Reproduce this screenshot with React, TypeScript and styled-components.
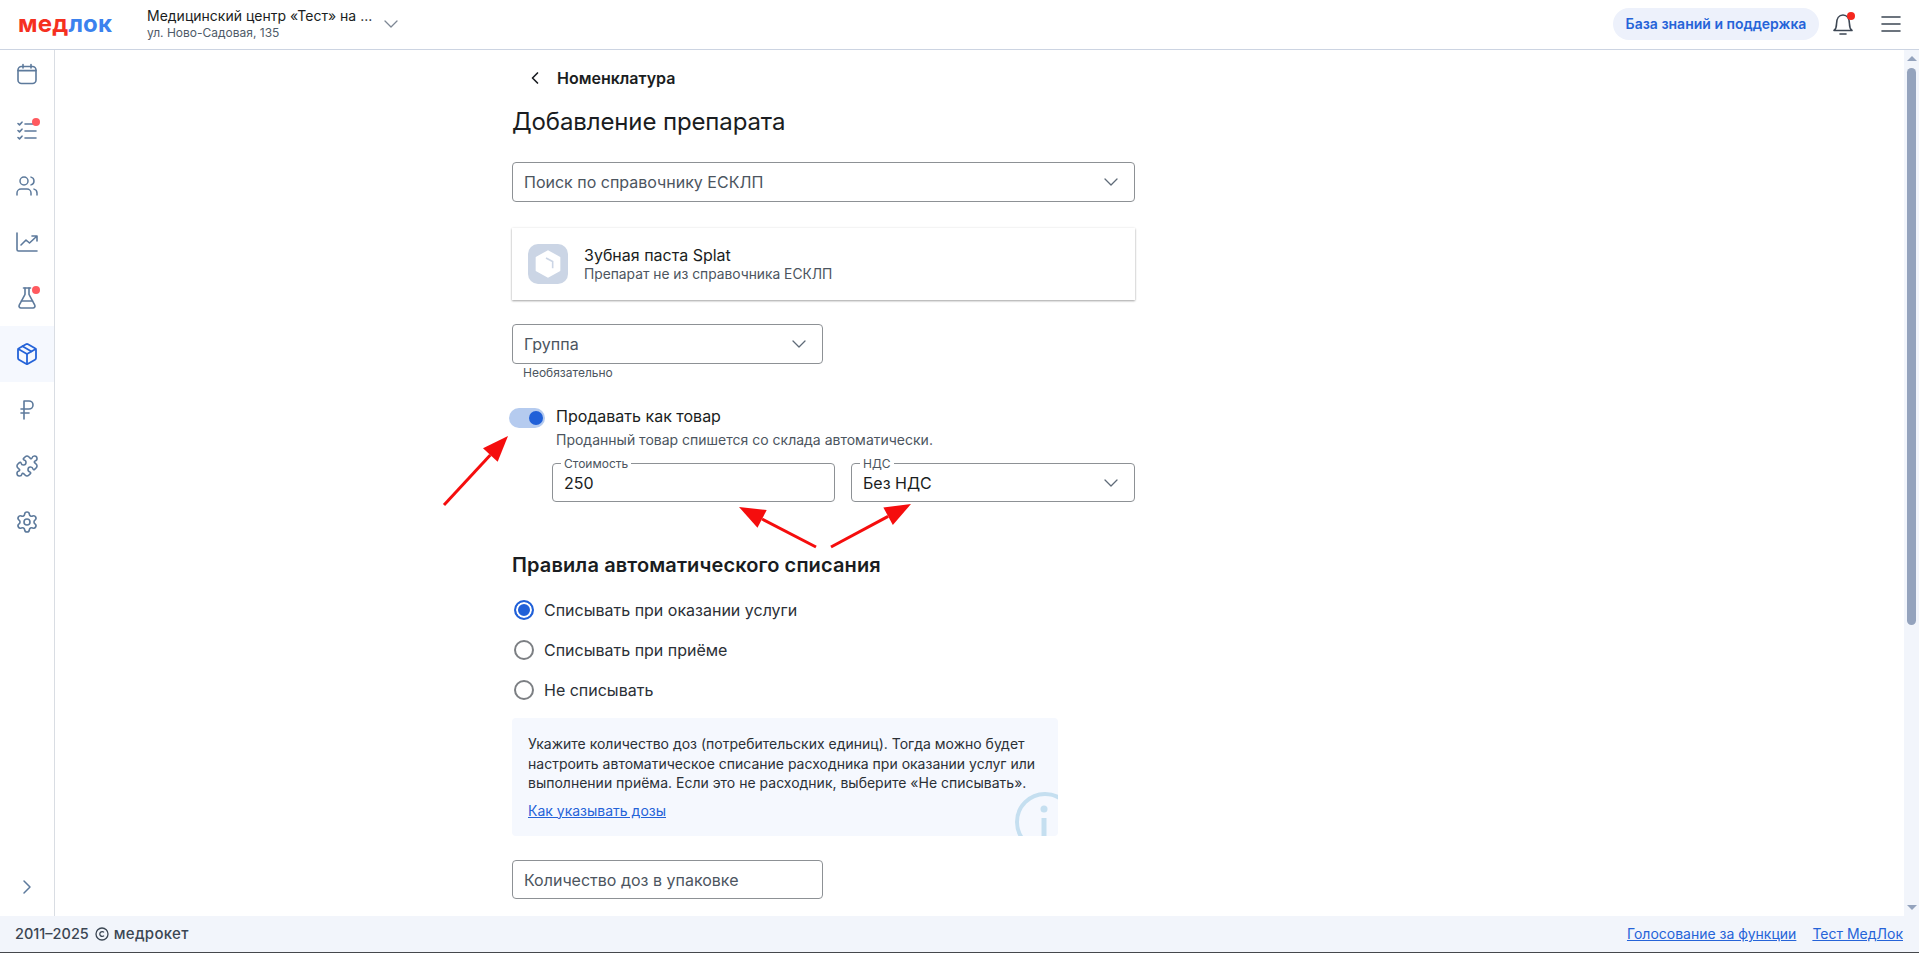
import React from 'react';
import styled, { createGlobalStyle } from 'styled-components';
import { Users, FlaskConical, Package, RussianRuble, Puzzle, Settings, ChevronDown, ChevronLeft, ChevronRight } from 'lucide-react';

const Global = createGlobalStyle`
  html, body { margin: 0; padding: 0; height: 100%; overflow: hidden; background: #fff; }
  body { font-family: Inter, "Noto Sans", sans-serif; color: #1a1d21; }
  #root { height: 100%; }
  * { box-sizing: border-box; }
`;

const Page = styled.div`
  height: 953px;
  display: flex;
  flex-direction: column;
  position: relative;
  overflow: hidden;
`;

const Header = styled.header`
  height: 50px;
  flex: none;
  display: flex;
  align-items: center;
  border-bottom: 1px solid #ccd4e2;
  padding: 0 16px 2px 18px;
`;

const Logo = styled.div`
  width: 129px;
  font-size: 24px;
  font-weight: 700;
  line-height: 24px;
  letter-spacing: 0.2px;
  color: #f5301f;
  span { color: #3b82ee; }
`;

const Clinic = styled.div`
  width: 224px;
  display: flex;
  flex-direction: column;
`;
const ClinicName = styled.div`
  font-size: 14px;
  line-height: 18px;
  color: #1a1d21;
  white-space: nowrap;
`;
const ClinicAddress = styled.div`
  font-size: 12px;
  line-height: 15px;
  color: #4f5b69;
`;
const ClinicChevron = styled(ChevronDown)`
  color: #7d8794;
  margin-left: 8px;
`;

const HeaderRight = styled.div`
  margin-left: auto;
  display: flex;
  align-items: center;
`;
const HelpButton = styled.button`
  height: 32px;
  width: 206px;
  border: none;
  border-radius: 16px;
  background: #edf1fb;
  color: #2563d8;
  font: 600 14px Inter, sans-serif;
  padding: 0;
`;
const BellWrap = styled.div`
  position: relative;
  width: 24px;
  height: 24px;
  margin-left: 12px;
  color: #3d4754;
`;
const BellDot = styled.span`
  position: absolute;
  top: 0;
  right: 0;
  width: 8px;
  height: 8px;
  border-radius: 50%;
  background: #f5281e;
`;
const Burger = styled.svg`
  margin-left: 24px;
  color: #3d4754;
`;

const Body = styled.div`
  flex: 1;
  min-height: 0;
  display: flex;
`;

const Sidebar = styled.nav`
  width: 55px;
  flex: none;
  border-right: 1px solid #d9dde3;
  display: flex;
  flex-direction: column;
`;
const SideList = styled.div`
  margin-top: -4px;
  display: flex;
  flex-direction: column;
`;
const SideItem = styled.div<{ $active?: boolean }>`
  height: 56px;
  display: flex;
  align-items: center;
  justify-content: center;
  color: ${p => (p.$active ? '#2563d8' : '#5d7a9c')};
  background: ${p => (p.$active ? '#f5f8fe' : 'transparent')};
`;
const IconWrap = styled.div`
  position: relative;
  width: 24px;
  height: 24px;
`;
const SideDot = styled.span`
  position: absolute;
  top: 0;
  right: -1px;
  width: 8px;
  height: 8px;
  border-radius: 50%;
  background: #ff5a5f;
`;
const SideToggle = styled.div`
  margin-top: auto;
  height: 58px;
  display: flex;
  align-items: center;
  justify-content: center;
  color: #5d7a9c;
`;

const Main = styled.main`
  flex: 1;
  min-width: 0;
  overflow: hidden;
  padding: 11px 0 0 457px;
`;

const ScrollRail = styled.div`
  width: 15px;
  flex: none;
  background: #f2f5fb;
  display: flex;
  flex-direction: column;
  align-items: center;
`;
const ScrollArrow = styled.div<{ $down?: boolean }>`
  height: 17px;
  flex: none;
  display: flex;
  align-items: center;
  ${p => (p.$down ? 'margin-top: auto;' : '')}
  &::before {
    content: '';
    border-left: 5px solid transparent;
    border-right: 5px solid transparent;
    ${p => (p.$down ? 'border-top: 5px solid #94a3bd;' : 'border-bottom: 5px solid #94a3bd;')}
  }
`;
const ScrollThumb = styled.div`
  margin-top: 1px;
  width: 9px;
  height: 557px;
  border-radius: 5px;
  background: #94a3bd;
`;

const Column = styled.div`
  width: 623px;
  display: flex;
  flex-direction: column;
`;

const BackRow = styled.div`
  height: 32px;
  padding: 2px 0 0 13px;
  display: flex;
  align-items: center;
  gap: 12px;
  font-size: 16px;
  font-weight: 600;
  color: #1a1d21;
`;

const Title = styled.h1`
  margin: 13px 0 24px;
  font-size: 24px;
  line-height: 32px;
  letter-spacing: -0.12px;
  font-weight: 400;
  color: #1a1d21;
`;

const Field = styled.div<{ $width?: string; $height?: number }>`
  position: relative;
  height: ${p => p.$height || 40}px;
  width: ${p => p.$width || '100%'};
  flex: none;
  display: flex;
  align-items: center;
  justify-content: space-between;
  padding: 0 11px;
  border: 1px solid #8d9195;
  border-radius: 4px;
  background: #fff;
  font-size: 16px;
  color: #1a1d21;
`;
const Placeholder = styled.span`
  color: #4c5560;
`;
const FieldChevron = styled(ChevronDown)`
  color: #5f6b78;
  flex: none;
`;
const Legend = styled.span`
  position: absolute;
  top: -7px;
  left: 8px;
  padding: 0 3px;
  background: #fff;
  font-size: 12px;
  line-height: 14px;
  color: #4c5560;
`;

const DrugCard = styled.div`
  margin-top: 26px;
  height: 72px;
  display: flex;
  align-items: center;
  gap: 16px;
  padding-left: 16px;
  background: #fff;
  box-shadow: 0 1px 2px rgba(0, 0, 0, 0.35), 0 0 3px rgba(0, 0, 0, 0.06);
`;
const DrugIcon = styled.div`
  width: 40px;
  height: 40px;
  border-radius: 10px;
  background: #cbd5e5;
  display: flex;
  align-items: center;
  justify-content: center;
`;
const DrugName = styled.div`
  font-size: 16px;
  line-height: 20px;
  color: #1a1d21;
`;
const DrugNote = styled.div`
  font-size: 13.8px;
  line-height: 18px;
  color: #4c5560;
`;

const GroupBlock = styled.div`
  margin-top: 24px;
`;
const Helper = styled.div`
  margin: 2px 0 0 11px;
  font-size: 12px;
  line-height: 14px;
  color: #4c5560;
`;

const ToggleRow = styled.div`
  margin-top: 24px;
  display: flex;
  gap: 11px;
  margin-left: -3px;
`;
const Track = styled.div`
  width: 36px;
  height: 20px;
  margin-top: 4px;
  flex: none;
  border-radius: 10px;
  background: #b5cbef;
  display: flex;
  align-items: center;
  justify-content: flex-end;
  padding-right: 2px;
`;
const Knob = styled.div`
  width: 14px;
  height: 14px;
  border-radius: 50%;
  background: #2060d8;
`;
const ToggleText = styled.div`
  display: flex;
  flex-direction: column;
`;
const ToggleLabel = styled.div`
  font-size: 16px;
  line-height: 24px;
  color: #1a1d21;
`;
const ToggleNote = styled.div`
  margin-top: 2px;
  font-size: 14px;
  line-height: 20px;
  color: #4c5560;
`;

const PriceRow = styled.div`
  margin: 13px 0 0 40px;
  display: flex;
  gap: 16px;
`;

const SectionTitle = styled.h2`
  margin: 49px 0 11px;
  font-size: 20px;
  line-height: 28px;
  letter-spacing: 0.12px;
  font-weight: 600;
  color: #1a1d21;
`;

const RadioRow = styled.div`
  height: 40px;
  display: flex;
  align-items: center;
  gap: 10px;
  padding-left: 2px;
  font-size: 16px;
  color: #2b3036;
`;
const RadioDot = styled.span<{ $on?: boolean }>`
  width: 20px;
  height: 20px;
  border-radius: 50%;
  border: 2px solid ${p => (p.$on ? '#2060d8' : '#7c7f83')};
  background: ${p => (p.$on ? '#2060d8' : '#fff')};
  box-shadow: ${p => (p.$on ? 'inset 0 0 0 2px #fff' : 'none')};
  flex: none;
`;

const InfoBox = styled.div`
  position: relative;
  margin-top: 8px;
  width: 546px;
  height: 118px;
  overflow: hidden;
  padding: 16px 16px 0;
  border-radius: 4px;
  background: #f5f8fe;
  font-size: 14px;
  line-height: 19.6px;
  color: #2b3036;
`;
const InfoLink = styled.a`
  display: block;
  margin-top: 8px;
  color: #2563d8;
  text-decoration: underline;
`;
const InfoMark = styled.svg`
  position: absolute;
  left: 503px;
  top: 74px;
  color: #c5dff0;
`;

const QtyBlock = styled.div`
  margin-top: 24px;
`;

const Footer = styled.footer`
  height: 37px;
  flex: none;
  display: flex;
  align-items: center;
  justify-content: space-between;
  padding: 0 16px 1px 15px;
  background: #f2f5fb;
  border-bottom: 1px solid #45484c;
  font-size: 14px;
`;
const Copy = styled.div`
  display: flex;
  align-items: center;
  font-size: 14.5px;
  font-weight: 500;
  color: #3b4653;
`;
const CopyMark = styled.svg`
  margin: 0 5px 0 6px;
`;
const CopyBrand = styled.span`
  font-size: 15px;
  letter-spacing: 0.3px;
`;
const FooterLinks = styled.div`
  display: flex;
  gap: 16px;
`;
const FooterLink = styled.a`
  color: #2563d8;
  text-decoration: underline;
`;

const Annotation = styled.svg`
  position: absolute;
  inset: 0;
  pointer-events: none;
`;

const st = { fill: 'none', stroke: 'currentColor', strokeWidth: 1.6, strokeLinecap: 'round' as const, strokeLinejoin: 'round' as const };

const CalendarIcon = () => (
  <svg width="24" height="24" viewBox="0 0 24 24" {...st}>
    <rect x="3" y="4.5" width="18" height="17" rx="3.5" />
    <path d="M3 8.6h18M8 2.5v3.5M16 2.5v3.5" />
  </svg>
);
const TasksIcon = () => (
  <svg width="24" height="24" viewBox="0 0 24 24" {...st}>
    <path d="M3 5.5l1.5 1.4L7 4.2M3 12.5l1.5 1.4L7 11.2M3 19.5l1.5 1.4L7 18.2M10 6h9M10 13h11M10 20h11" />
  </svg>
);
const ChartIcon = () => (
  <svg width="24" height="24" viewBox="0 0 24 24" {...st}>
    <path d="M2 3v16.5a1.5 1.5 0 0 0 1.5 1.5H22M6 15l5-5 3.5 3L21.5 6.5M17 6h5v5" />
  </svg>
);

const items = [
  { icon: <CalendarIcon /> },
  { icon: <TasksIcon />, dot: true },
  { icon: <Users size={24} strokeWidth={1.5} /> },
  { icon: <ChartIcon /> },
  { icon: <FlaskConical size={24} strokeWidth={1.6} />, dot: true },
  { icon: <Package size={24} strokeWidth={1.8} />, active: true },
  { icon: <RussianRuble size={24} strokeWidth={1.6} /> },
  { icon: <Puzzle size={24} strokeWidth={1.6} /> },
  { icon: <Settings size={24} strokeWidth={1.6} /> },
];

const Arrow = ({ x1, y1, x2, y2 }: { x1: number; y1: number; x2: number; y2: number }) => {
  const a = Math.atan2(y2 - y1, x2 - x1);
  const len = 26;
  const w = 10;
  const bx = x2 - Math.cos(a) * len;
  const by = y2 - Math.sin(a) * len;
  const nx = -Math.sin(a) * w;
  const ny = Math.cos(a) * w;
  return (
    <g>
      <line x1={x1} y1={y1} x2={bx} y2={by} stroke="#f50d0d" strokeWidth="3" />
      <polygon points={`${x2},${y2} ${bx + nx},${by + ny} ${bx - nx},${by - ny}`} fill="#f50d0d" />
    </g>
  );
};

export default function App() {
  return (
    <Page>
      <Global />
      <Header>
        <Logo>мед<span>лок</span></Logo>
        <Clinic>
          <ClinicName>Медицинский центр «Тест» на ...</ClinicName>
          <ClinicAddress>ул. Ново-Садовая, 135</ClinicAddress>
        </Clinic>
        <ClinicChevron size={24} strokeWidth={1.3} />
        <HeaderRight>
          <HelpButton>База знаний и поддержка</HelpButton>
          <BellWrap>
            <svg width="24" height="24" viewBox="0 0 24 24" fill="none" stroke="currentColor" strokeWidth="1.6" strokeLinecap="round" strokeLinejoin="round">
              <path d="M3 18.5c2-1.5 2.5-3 2.5-6.5C5.5 6.5 8 3 12 3s6.5 3.5 6.5 9c0 3.5.5 5 2.5 6.5H3z" />
              <path d="M9 22h6" />
            </svg>
            <BellDot />
          </BellWrap>
          <Burger width="24" height="24" viewBox="0 0 24 24" fill="none" stroke="currentColor" strokeWidth="1.6" strokeLinecap="round">
            <path d="M3 5h18M3 12h18M3 19h18" />
          </Burger>
        </HeaderRight>
      </Header>
      <Body>
        <Sidebar>
          <SideList>
            {items.map((it, i) => (
              <SideItem key={i} $active={it.active}>
                <IconWrap>
                  {it.icon}
                  {it.dot && <SideDot />}
                </IconWrap>
              </SideItem>
            ))}
          </SideList>
          <SideToggle>
            <ChevronRight size={24} strokeWidth={1.5} />
          </SideToggle>
        </Sidebar>
        <Main>
          <Column>
            <BackRow>
              <ChevronLeft size={20} strokeWidth={2} />
              Номенклатура
            </BackRow>
            <Title>Добавление препарата</Title>
            <Field>
              <Placeholder>Поиск по справочнику ЕСКЛП</Placeholder>
              <FieldChevron size={24} strokeWidth={1.3} />
            </Field>
            <DrugCard>
              <DrugIcon>
                <svg width="32" height="32" viewBox="0 0 24 24">
                  <path d="M12 2.5l8.5 4.7v9.6L12 21.5l-8.5-4.7V7.2z" fill="#fff" stroke="#fff" strokeWidth="1.5" strokeLinejoin="round" />
                  <path d="M10.5 7.5l5 2.7v5" fill="none" stroke="#cbd5e5" strokeWidth="1.2" />
                </svg>
              </DrugIcon>
              <div>
                <DrugName>Зубная паста Splat</DrugName>
                <DrugNote>Препарат не из справочника ЕСКЛП</DrugNote>
              </div>
            </DrugCard>
            <GroupBlock>
              <Field $width="311px">
                <Placeholder>Группа</Placeholder>
                <FieldChevron size={24} strokeWidth={1.3} />
              </Field>
              <Helper>Необязательно</Helper>
            </GroupBlock>
            <ToggleRow>
              <Track><Knob /></Track>
              <ToggleText>
                <ToggleLabel>Продавать как товар</ToggleLabel>
                <ToggleNote>Проданный товар спишется со склада автоматически.</ToggleNote>
              </ToggleText>
            </ToggleRow>
            <PriceRow>
              <Field $width="283px" $height={39}>
                <Legend>Стоимость</Legend>
                <span>250</span>
              </Field>
              <Field $width="284px" $height={39}>
                <Legend>НДС</Legend>
                <span>Без НДС</span>
                <FieldChevron size={24} strokeWidth={1.3} />
              </Field>
            </PriceRow>
            <SectionTitle>Правила автоматического списания</SectionTitle>
            <RadioRow><RadioDot $on />Списывать при оказании услуги</RadioRow>
            <RadioRow><RadioDot />Списывать при приёме</RadioRow>
            <RadioRow><RadioDot />Не списывать</RadioRow>
            <InfoBox>
              Укажите количество доз (потребительских единиц). Тогда можно будет настроить автоматическое списание расходника при оказании услуг или выполнении приёма. Если это не расходник, выберите «Не списывать».
              <InfoLink>Как указывать дозы</InfoLink>
              <InfoMark width="60" height="60" viewBox="0 0 60 60">
                <circle cx="30" cy="30" r="28" fill="none" stroke="currentColor" strokeWidth="4" />
                <circle cx="29" cy="17" r="3.5" fill="currentColor" />
                <path d="M29 26v22" stroke="currentColor" strokeWidth="5" fill="none" />
              </InfoMark>
            </InfoBox>
            <QtyBlock>
              <Field $width="311px" $height={39}>
                <Placeholder>Количество доз в упаковке</Placeholder>
              </Field>
            </QtyBlock>
          </Column>
        </Main>
        <ScrollRail>
          <ScrollArrow />
          <ScrollThumb />
          <ScrollArrow $down />
        </ScrollRail>
      </Body>
      <Footer>
        <Copy>
          2011–2025
          <CopyMark width="14" height="14" viewBox="0 0 14 14" fill="none" stroke="currentColor" strokeWidth="1.3">
            <circle cx="7" cy="7" r="6" />
            <path d="M9 5.4a2.4 2.4 0 1 0 0 3.2" />
          </CopyMark>
          <CopyBrand>медрокет</CopyBrand>
        </Copy>
        <FooterLinks>
          <FooterLink>Голосование за функции</FooterLink>
          <FooterLink>Тест МедЛок</FooterLink>
        </FooterLinks>
      </Footer>
      <Annotation width="1919" height="953" viewBox="0 0 1919 953">
        <Arrow x1={444} y1={505} x2={508} y2={436} />
        <Arrow x1={816} y1={547} x2={739} y2={507} />
        <Arrow x1={831} y1={547} x2={911} y2={504} />
      </Annotation>
    </Page>
  );
}
